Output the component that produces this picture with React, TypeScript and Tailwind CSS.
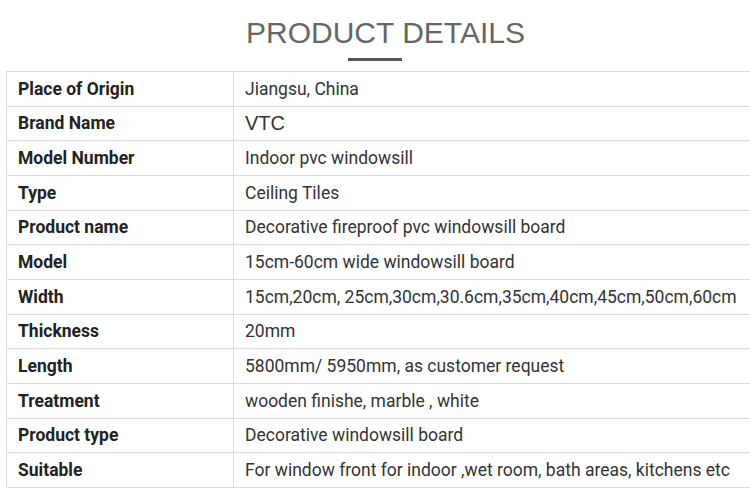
const rows: [string, string][] = [
  ["Place of Origin", "Jiangsu, China"],
  ["Brand Name", "VTC"],
  ["Model Number", "Indoor pvc windowsill"],
  ["Type", "Ceiling Tiles"],
  ["Product name", "Decorative fireproof pvc windowsill board"],
  ["Model", "15cm-60cm wide windowsill board"],
  ["Width", "15cm,20cm, 25cm,30cm,30.6cm,35cm,40cm,45cm,50cm,60cm"],
  ["Thickness", "20mm"],
  ["Length", "5800mm/ 5950mm, as customer request"],
  ["Treatment", "wooden finishe, marble , white"],
  ["Product type", "Decorative windowsill board"],
  ["Suitable", "For window front for indoor ,wet room, bath areas, kitchens etc"],
];

export default function App() {
  return (
    <div className="w-[750px] h-[498px] overflow-hidden bg-white">
      <div className="flex flex-col items-center">
        <h2 className="pt-[15px] pl-[21px] text-[30px] leading-[36px] text-[#666] font-['Liberation_Sans',Arial,sans-serif] font-normal">
          PRODUCT DETAILS
        </h2>
        <div className="mt-[7px] h-[3px] w-[54px] bg-[#555]" />
      </div>
      <div className="mt-[10px] ml-[6px] w-[760px] border-t border-l border-[#dcdcdc] font-['Roboto',Arial,sans-serif] text-[17.5px] text-[#333]">
        {rows.map(([label, value]) => (
          <div key={label} className="flex h-[34.67px] border-b border-[#dcdcdc]">
            <div className="w-[227px] shrink-0 flex items-center pl-[11px] border-r border-[#dcdcdc] font-bold text-[#222]">
              {label}
            </div>
            <div className="flex-1 flex items-center pl-[11px] whitespace-nowrap">
              {value === "VTC" ? (
                <span className="text-[20px] font-['Liberation_Sans',Arial,sans-serif]">{value}</span>
              ) : (
                value
              )}
            </div>
          </div>
        ))}
      </div>
    </div>
  );
}
